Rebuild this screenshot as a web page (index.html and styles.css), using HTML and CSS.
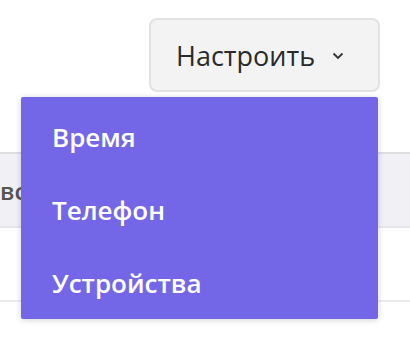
FILE: index.html
```html
<!DOCTYPE html>
<html lang="ru">
<head>
  <meta charset="UTF-8">
  <title>Настроить</title>
  <link rel="stylesheet" href="styles.css">
</head>
<body>

  <div class="toolbar">
    <div class="dropdown">
      <button class="toggle">
        Настроить
        <svg class="chevron" width="12" height="8" viewBox="0 0 12 8">
          <path d="M1.5 1.5 L6 6 L10.5 1.5" fill="none" stroke="#333" stroke-width="1.8"/>
        </svg>
      </button>
    </div>
  </div>

  <div class="table">
    <div class="row head"><span class="cell">вс</span></div>
    <div class="row"><span class="cell"></span></div>
  </div>

  <ul class="menu">
    <li>Время</li>
    <li>Телефон</li>
    <li>Устройства</li>
  </ul>

</body>
</html>
```

FILE: styles.css
```css
body {
  margin: 0;
  background: #fff;
  font-family: "Open Sans", "Noto Sans", sans-serif;
  position: relative;
  overflow: hidden;
  height: 348px;
}

.toolbar {
  display: flex;
  justify-content: flex-end;
  padding: 18px 30px 0 0;
  height: 74px;
}

.toggle {
  display: flex;
  align-items: center;
  gap: 17px;
  height: 74px;
  width: 231px;
  justify-content: flex-start;
  padding: 0 0 0 25px;
  background: #f3f3f3;
  border: 2px solid #e2e2e2;
  border-radius: 8px;
  font-family: inherit;
  font-size: 27px;
  font-weight: 500;
  color: #2a2a2a;
}

.chevron {
  margin-top: 2px;
}

.table {
  margin-top: 60px;
}

.row {
  height: 72px;
  border-top: 2px solid #e6e6ea;
  display: flex;
  align-items: center;
}

.row.head {
  background: #f1f0f5;
  border-top-color: #dedede;
}

.row:last-child {
  border-bottom: 2px solid #ececf0;
}

.cell {
  margin-left: 0;
  font-size: 24px;
  font-weight: 600;
  color: #555;
}

.menu {
  position: absolute;
  left: 21px;
  top: 97px;
  width: 357px;
  height: 222px;
  margin: 0;
  padding: 7px 0 0 0;
  box-sizing: border-box;
  list-style: none;
  background: #7367e8;
  border-radius: 2px;
  box-shadow: 0 1px 6px rgba(0,0,0,0.18);
}

.menu li {
  height: 73px;
  line-height: 66px;
  padding-left: 31px;
  font-size: 26px;
  font-weight: 600;
  color: #fff;
}
```
